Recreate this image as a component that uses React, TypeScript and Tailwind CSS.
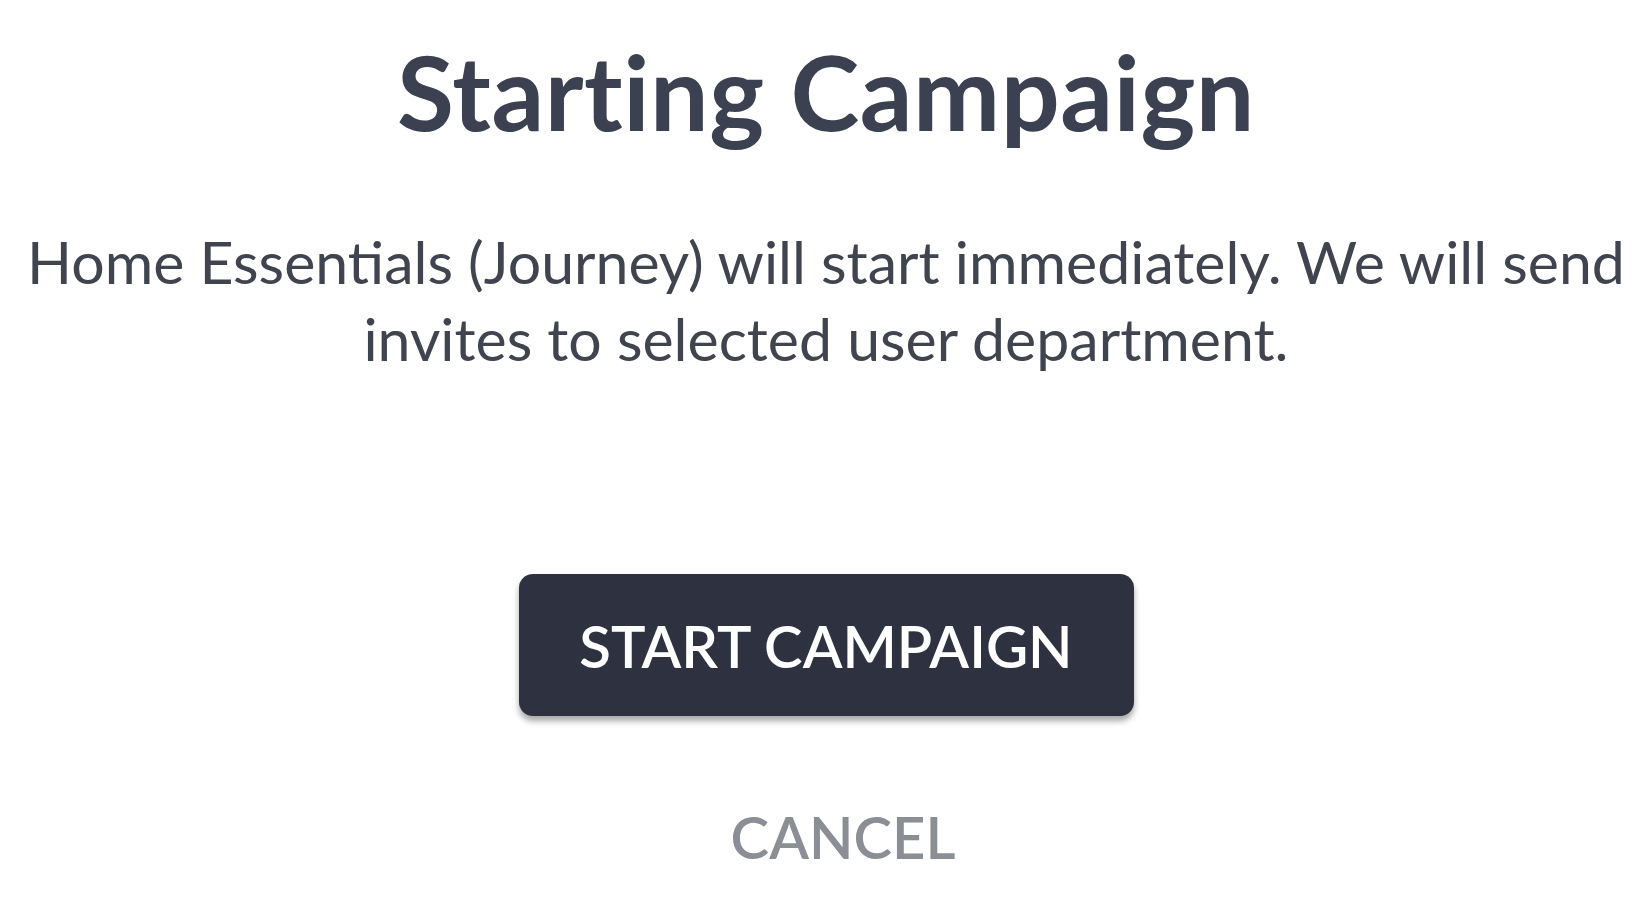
export default function App() {
  return (
    <div
      className="min-h-screen bg-white flex flex-col items-center"
      style={{ fontFamily: 'Lato, "Open Sans", sans-serif' }}
    >
      {/* Title */}
      <h1 className="mt-[36px] text-[104px] leading-[110px] font-bold text-[#3c4151] tracking-[0.5px]">
        Starting Campaign
      </h1>

      {/* Message */}
      <p className="mt-[77px] w-[1630px] text-center text-[59px] leading-[77px] text-[#40444f]">
        Home Essentials (Journey) will start immediately. We will send invites to selected user department.
      </p>

      {/* Actions */}
      <button className="mt-[197px] w-[615px] h-[142px] rounded-[14px] bg-[#2e3140] text-white text-[58px] font-semibold shadow-[0_5px_6px_rgba(0,0,0,0.35)]">
        START CAMPAIGN
      </button>

      <button className="mt-[86px] pl-[34px] text-[58px] leading-[70px] font-semibold text-[#8b8e94]">
        CANCEL
      </button>
    </div>
  )
}
